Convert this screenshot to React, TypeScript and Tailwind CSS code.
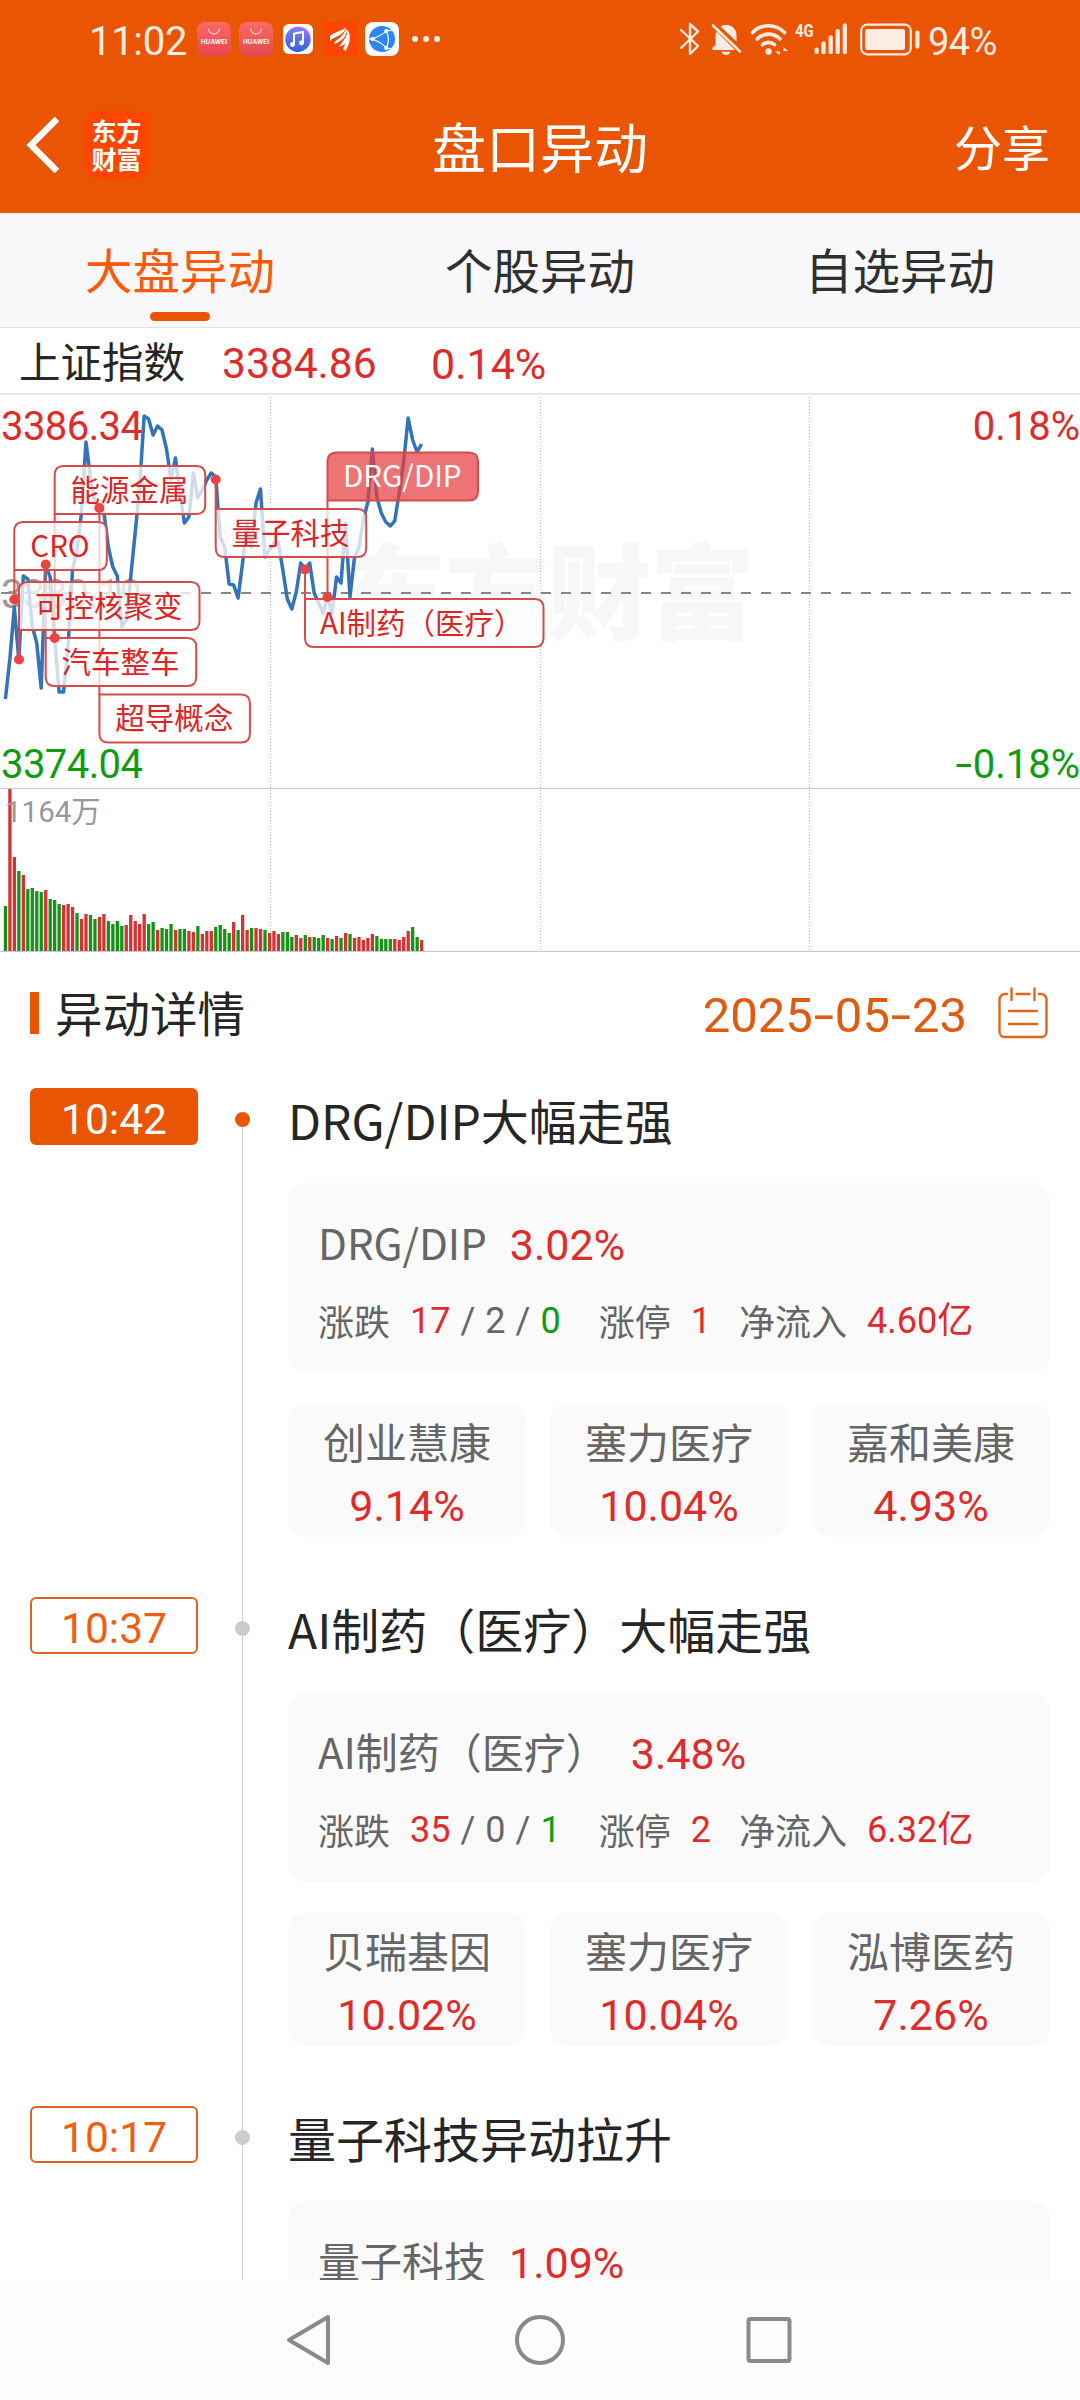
import clsx from 'clsx';

type Tone = 'up' | 'down';

interface Tag {
    label: string;
    x: number;
    y: number;
    width: number;
    dotY: number;
    active?: boolean;
}

interface Stock {
    name: string;
    change: string;
}

interface BoardStats {
    up: number;
    flat: number;
    down: number;
    limitUp: number;
    inflow: string;
}

interface Movement {
    time: string;
    title: string;
    board: string;
    change: string;
    stats?: BoardStats;
    stocks?: Stock[];
}

const MINUTE_WIDTH = 4.475;
const FIRST_MINUTE = 5.4;
const TAG_HEIGHT = 48;

// One y value per traded minute, measured from the top of the chart
const PRICES = [
    304, 264, 212, 265, 181, 184, 231, 248, 293, 170, 182, 243, 297, 297, 252, 175, 155, 118, 47, 82,
    108, 113, 117, 152, 172, 181, 232, 225, 182, 138, 92, 21, 24, 40, 31, 35, 54, 85, 63, 98,
    128, 122, 78, 103, 95, 85, 78, 82, 142, 152, 189, 190, 203, 168, 128, 152, 108, 94, 162, 155,
    148, 148, 175, 204, 214, 197, 168, 174, 168, 198, 208, 218, 202, 218, 182, 188, 128, 202, 163, 152,
    125, 107, 54, 102, 118, 127, 131, 126, 98, 67, 23, 45, 57, 49,
];

// Bar heights of the volume chart
const VOLUMES = [
    45, 162, 94, 80, 76, 62, 63, 60, 59, 61, 52, 51, 47, 46, 47, 44, 38, 32, 37, 36,
    32, 34, 37, 30, 27, 30, 25, 26, 36, 30, 27, 37, 27, 29, 21, 23, 22, 27, 21, 22,
    22, 20, 19, 25, 17, 20, 20, 24, 26, 22, 18, 29, 21, 36, 21, 23, 23, 22, 21, 18,
    20, 17, 19, 19, 14, 16, 13, 16, 14, 14, 13, 16, 13, 12, 15, 13, 18, 17, 13, 14,
    11, 13, 17, 15, 12, 12, 12, 12, 11, 14, 20, 24, 14, 11,
];

const VOLUME_TONES =
    'GRRGRGGGGRGGGRRRGRRGGRRGGGGRRRRRGGRGGGRGGRRGRRRGGGGRGRRGRRGRRRGGGRRGRGGGRGRGRGRRRRRGGGGRRRRGGR';

const TAGS: Tag[] = [
    { label: 'DRG/DIP', x: 327.5, y: 57.5, width: 150.5, dotY: 202, active: true },
    { label: 'AI制药（医疗）', x: 305, y: 204, width: 238.5, dotY: 174.5 },
    { label: '量子科技', x: 215.7, y: 114, width: 150.5, dotY: 84.5 },
    { label: '超导概念', x: 99.4, y: 299.5, width: 150.5, dotY: 113 },
    { label: '能源金属', x: 54.7, y: 71, width: 150.5, dotY: 243 },
    { label: '汽车整车', x: 45.7, y: 243, width: 150.5, dotY: 169.5 },
    { label: 'CRO', x: 14.3, y: 127, width: 92.5, dotY: 204.5 },
    { label: '可控核聚变', x: 19, y: 187, width: 180.5, dotY: 264.5 },
];

const MOVEMENTS: Movement[] = [
    {
        time: '10:42',
        title: 'DRG/DIP大幅走强',
        board: 'DRG/DIP',
        change: '3.02%',
        stats: { up: 17, flat: 2, down: 0, limitUp: 1, inflow: '4.60亿' },
        stocks: [
            { name: '创业慧康', change: '9.14%' },
            { name: '塞力医疗', change: '10.04%' },
            { name: '嘉和美康', change: '4.93%' },
        ],
    },
    {
        time: '10:37',
        title: 'AI制药（医疗）大幅走强',
        board: 'AI制药（医疗）',
        change: '3.48%',
        stats: { up: 35, flat: 0, down: 1, limitUp: 2, inflow: '6.32亿' },
        stocks: [
            { name: '贝瑞基因', change: '10.02%' },
            { name: '塞力医疗', change: '10.04%' },
            { name: '泓博医药', change: '7.26%' },
        ],
    },
    {
        time: '10:17',
        title: '量子科技异动拉升',
        board: '量子科技',
        change: '1.09%',
    },
];

const NUM = "font-['Roboto','Noto_Sans_CJK_SC',sans-serif]";

const AppGalleryIcon = () => (
    <svg width="34" height="34" viewBox="0 0 34 34">
        <defs>
            <linearGradient id="gallery" x1="0" y1="0" x2="0" y2="1">
                <stop offset="0" stopColor="#fb6a63" />
                <stop offset="1" stopColor="#e5484f" />
            </linearGradient>
        </defs>
        <rect width="34" height="34" rx="8" fill="url(#gallery)" />
        <path d="M11.5 6.500a5.500 5.500 0 0 0 11 0" fill="none" stroke="#ffc9c4" strokeWidth="1.300" />
        <text x="17" y="22" textAnchor="middle" textLength="26" fontSize="6.200" fontWeight="700" fill="#fff" fontFamily="Inter, sans-serif">HUAWEI</text>
    </svg>
);

const MusicIcon = () => (
    <svg width="30" height="30" viewBox="0 0 30 30">
        <defs>
            <linearGradient id="music" x1="0" y1="0" x2="0" y2="1">
                <stop offset="0" stopColor="#8a7cf0" />
                <stop offset="1" stopColor="#2f62dc" />
            </linearGradient>
        </defs>
        <rect width="30" height="30" rx="6" fill="#fff" />
        <circle cx="15.800" cy="14.800" r="12.500" fill="#e9a6f3" />
        <circle cx="14.800" cy="15.400" r="12.500" fill="url(#music)" />
        <path d="M11 20.500V9.500l9-1.500v11" fill="none" stroke="#fff" strokeWidth="2" />
        <circle cx="9.500" cy="20.500" r="2.400" fill="#fff" />
        <circle cx="18.500" cy="19" r="2.400" fill="#fff" />
    </svg>
);

const FlameIcon = () => (
    <svg width="34" height="34" viewBox="0 0 34 34">
        <rect width="34" height="34" fill="#ff4500" />
        <g fill="#fff">
            <path d="M7 14C11 10 17 9.500 22 6c0 4-4 6.500-8 8.500-3 1.500-5.500 2-7 4.500z" />
            <path d="M11 22c1-5 9.500-6 12-16 2 6-1 9.500-5 12.500-3 2-4 3-7 3.500z" />
            <path d="M16 25c2-5 7.500-7 8-18 3 6 1.500 11-1.500 14.500-2 2-4 2-6.500 3.500z" />
            <path d="M20 27.500c1-4 5-8 5.500-19 2.500 7 1.500 13-3 20.500z" />
        </g>
        <g fill="none" stroke="#ff4500" strokeWidth="1">
            <path d="M10 20c3-5 8-5 11-10M15 24c3-5 7-6 8.500-13" />
        </g>
    </svg>
);

const BrowserIcon = () => (
    <svg width="34" height="34" viewBox="0 0 34 34">
        <rect width="34" height="34" rx="8" fill="#fff" />
        <circle cx="17" cy="17" r="13" fill="#2f86f0" />
        <g fill="none" stroke="#fff" strokeWidth="1.200">
            <path d="M7 17C12 15 18 13 21 9" />
            <path d="M7 17c5 2 11 4 14 9" />
            <path d="M21 9c3.500 5 3 12 0 17" />
            <path d="M21 9l7-1M21 26l5 1M7 17H3" />
        </g>
        <circle cx="7.500" cy="17" r="2.100" fill="#fff" />
        <circle cx="21.300" cy="9" r="2.100" fill="#fff" />
        <circle cx="21.300" cy="26" r="2.100" fill="#fff" />
    </svg>
);

const BluetoothIcon = () => (
    <svg width="22" height="36" viewBox="0 0 22 36" fill="none" stroke="#fdece3" strokeWidth="2.400" strokeLinejoin="round" strokeLinecap="round">
        <path d="M2 9l17 16-8 8V3l8 7.500L2 27" />
    </svg>
);

const MutedBellIcon = () => (
    <svg width="31" height="34" viewBox="0 0 31 34" fill="#fdece3">
        <path d="M5.500 9.500L24 28H1.500v-2.500L4.500 23V13z" />
        <path d="M9.500 4.500c1.200-.8 1.800-1 3-1.500h5c5 1.500 8 5 8 10v6.500z" />
        <path d="M10.500 29.800h9c-1 4.200-8 4.200-9 0z" />
        <path d="M2 3.500l27 26" stroke="#fdece3" strokeWidth="2.600" strokeLinecap="round" />
    </svg>
);

const WifiIcon = () => (
    <svg width="39" height="34" viewBox="0 0 39 34" fill="none" stroke="#fdece3" strokeWidth="3.600" strokeLinecap="round">
        <path d="M2.500 10.500c9-9 23-9 32 0" />
        <path d="M7 17c6.500-6.500 16.500-6.500 23 0" />
        <path d="M12.500 22.800c3.500-3.300 8.500-3.300 12 0" />
        <circle cx="18.500" cy="29.500" r="3.200" fill="#fdece3" stroke="none" />
        <path d="M30 25v8l-5-3.500h5M33.500 33v-8l4.500 4h-4.500" fill="#fdece3" stroke="none" />
    </svg>
);

const SignalIcon = () => (
    <svg width="34" height="32" viewBox="0 0 34 32" fill="#fdece3">
        <rect x="0.500" y="24.500" width="4.200" height="6.500" rx="2" />
        <rect x="7.500" y="18.500" width="4.200" height="12.500" rx="1.500" />
        <rect x="14.600" y="12.500" width="4.200" height="18.500" rx="1.500" />
        <rect x="21.600" y="6" width="4.200" height="25" rx="1.500" />
        <rect x="28.700" y="0.500" width="4.200" height="30.500" rx="1.500" />
    </svg>
);

const BatteryIcon = () => (
    <svg width="60" height="33" viewBox="0 0 60 33" fill="#fdece3">
        <rect x="1.200" y="1.700" width="49.600" height="29.600" rx="6" fill="none" stroke="#fdece3" strokeWidth="2.200" />
        <rect x="5" y="6" width="40" height="21" rx="2.500" />
        <rect x="55.300" y="7.500" width="4.200" height="18" rx="2" />
    </svg>
);

const CalendarIcon = () => (
    <svg width="50" height="52" viewBox="0 0 50 52" fill="none" stroke="#e0661c" strokeWidth="2.400" strokeLinecap="round">
        <path d="M9 7H7a5.500 5.500 0 0 0-5.500 5.500V45a5 5 0 0 0 5 5h37a5 5 0 0 0 5-5V12.500A5.500 5.500 0 0 0 43 7h-2" />
        <path d="M13.500 1.500V13M36.500 1.500V13M18.500 7h13M11 24h28M11 37h28" />
    </svg>
);

const StatusBar = () => (
    <div className={clsx('flex h-[78px] items-center pl-[89px] text-[#fdece3]', NUM)}>
        <span className="w-[108px] pt-[5px] text-[40px] leading-[40px] tracking-[-0.3px]">11:02</span>
        <div className="flex items-center">
            <AppGalleryIcon />
            <div className="ml-2"><AppGalleryIcon /></div>
            <div className="ml-[10px]"><MusicIcon /></div>
            <div className="ml-[10px]"><FlameIcon /></div>
            <div className="ml-2"><BrowserIcon /></div>
        </div>
        <div className="ml-[13px] flex gap-[5px]">
            <span className="size-[6px] rounded-full bg-[#fdece3]" />
            <span className="size-[6px] rounded-full bg-[#fdece3]" />
            <span className="size-[6px] rounded-full bg-[#fdece3]" />
        </div>
        <div className="ml-auto mr-[83px] flex items-center">
            <BluetoothIcon />
            <div className="ml-[10px]"><MutedBellIcon /></div>
            <div className="ml-[8px]"><WifiIcon /></div>
            <span className="mb-[17px] ml-[6px] w-[18px] origin-left scale-x-[0.78] text-[19px] font-bold leading-[20px]">4G</span>
            <div className="ml-[1px]"><SignalIcon /></div>
            <div className="ml-[12px]"><BatteryIcon /></div>
            <span className="ml-[8px] w-[69px] pt-[5px] text-[38px] leading-[38px] tracking-[-0.6px]">94%</span>
        </div>
    </div>
);

const TitleBar = () => (
    <div className="grid h-[135px] grid-cols-3 items-center pb-[2px]">
        <div className="flex items-center pl-[26px]">
            <svg width="33" height="56" viewBox="0 0 33 56" fill="none" stroke="#fff" strokeWidth="6.500">
                <path d="M31 2L5 28l26 26" />
            </svg>
            <div className="ml-[24px] flex h-[67px] w-[67px] flex-col items-center justify-center rounded-[14px] bg-[#ff4600] pb-[2px] text-[25px] font-bold leading-[28px] text-white">
                <span>东方</span>
                <span>财富</span>
            </div>
        </div>
        <h1 className="pt-[2px] text-center text-[54px] leading-none text-white">盘口异动</h1>
        <span className="pr-[30px] text-right text-[48px] leading-none text-white">分享</span>
    </div>
);

const Tabs = () => (
    <div className="grid h-[115px] shrink-0 grid-cols-3 border-b border-[#e2e2e2] bg-[#f8f8fa]">
        {['大盘异动', '个股异动', '自选异动'].map((tab, i) => (
            <div
                key={tab}
                className={clsx(
                    'flex flex-col items-center pt-[27px] text-[47.5px] leading-[58px]',
                    i === 0 ? 'text-[#fb5a08]' : 'text-[#303030]'
                )}
            >
                {tab}
                {i === 0 && <span className="mt-[14px] h-[9px] w-[60px] rounded-full bg-[#ea5504]" />}
            </div>
        ))}
    </div>
);

const tagPath = ({ x, y, width, dotY }: Tag) => {
    const r = 9;
    const right = x + width;
    const bottom = y + TAG_HEIGHT;
    // The corner the pointer leaves from stays square
    const below = dotY > y + TAG_HEIGHT / 2;
    const topLeft = below ? `M${x} ${y + r}Q${x} ${y} ${x + r} ${y}` : `M${x} ${y}`;
    const bottomLeft = below ? `H${x}` : `H${x + r}Q${x} ${bottom} ${x} ${bottom - r}`;
    return `${topLeft}H${right - r}Q${right} ${y} ${right} ${y + r}V${bottom - r}Q${right} ${bottom} ${right - r} ${bottom}${bottomLeft}Z`;
};

const MarketChart = () => {
    const points = PRICES.map((y, i) => `${FIRST_MINUTE + i * MINUTE_WIDTH},${y}`).join(' ');

    return (
        <svg width="1080" height="557" viewBox="0 0 1080 557" className="block shrink-0">
            <text x="342" y="237" textLength="412" fontSize="104" fontWeight="900" fill="#f7f7f7" fontFamily="Noto Sans CJK SC, sans-serif">东方财富</text>

            {/* Grid */}
            {[270.5, 540.5, 809.5].map(x => (
                <path key={x} d={`M${x} 2V556`} stroke="#b8b8b8" strokeDasharray="1 2" />
            ))}
            <path d="M0 393.500H1080M0 556.500H1080" stroke="#c8c8c8" />

            <g fontFamily="Roboto, Noto Sans CJK SC, sans-serif" fontSize="40">
                <text x="1" y="212.500" textLength="141" fill="#999">3380.19</text>
                <path d="M1 198H1072" stroke="#868686" strokeWidth="2" strokeDasharray="10 10" />
                <polyline points={points} fill="none" stroke="#3373b9" strokeWidth="3.500" strokeLinejoin="round" />
                <text x="1" y="44.500" textLength="142" fill="#e02b2b">3386.34</text>
                <text x="1" y="383" textLength="142" fill="#109c10">3374.04</text>
                <text x="1080" y="44.500" textAnchor="end" fill="#e02b2b">0.18%</text>
                <text x="1080" y="383" textAnchor="end" fill="#109c10">0.18%</text>
                <text transform="translate(955.500 383) scale(1.500 1)" fill="#109c10">-</text>
            </g>

            {/* Volume */}
            {VOLUMES.map((h, i) => (
                <rect
                    key={i}
                    x={FIRST_MINUTE + i * MINUTE_WIDTH - 1.6}
                    y={556 - h}
                    width="3.300"
                    height={h}
                    fill={VOLUME_TONES[i] === 'R' ? '#d53232' : '#169316'}
                />
            ))}
            <text x="5" y="427" fontSize="29.500" fill="#999" fontFamily="Roboto, Noto Sans CJK SC, sans-serif">1164万</text>

            {/* Sector tags */}
            {TAGS.map(tag => (
                <g key={tag.label}>
                    <path
                        d={`M${tag.x} ${tag.dotY}V${tag.dotY > tag.y ? tag.y + TAG_HEIGHT : tag.y}`}
                        stroke="#de4b4b"
                        strokeWidth="2"
                    />
                    <path
                        d={tagPath(tag)}
                        fill={tag.active ? '#e83d40' : '#fff'}
                        fillOpacity={tag.active ? 0.72 : 0.76}
                        stroke="#d64c4c"
                        strokeWidth="2"
                    />
                    <text
                        x={tag.label.startsWith('AI') ? tag.x + 15 : tag.x + tag.width / 2 - 0.5}
                        y={tag.y + 34.5}
                        textAnchor={tag.label.startsWith('AI') ? 'start' : 'middle'}
                        fontSize="29.500"
                        fill={tag.active ? '#fff' : '#dc2626'}
                        fontFamily="Noto Sans CJK SC, sans-serif"
                    >
                        {tag.label}
                    </text>
                </g>
            ))}
            {TAGS.map(tag => (
                <circle key={tag.label} cx={tag.x} cy={tag.dotY} r="5" fill="#e74444" />
            ))}
        </svg>
    );
};

const Num = ({ tone, className, children }: { tone?: Tone; className?: string; children: React.ReactNode }) => (
    <span
        className={clsx(
            NUM,
            tone === 'up' && 'text-[#e02b2b]',
            tone === 'down' && 'text-[#0f9d0f]',
            className
        )}
    >
        {children}
    </span>
);

const StatsRow = ({ stats }: { stats: BoardStats }) => (
    <div className="flex pt-[22px] text-[36px] leading-[50px]">
        <span className="-mt-px">涨跌</span>
        <span className="ml-[20px] flex gap-[10px]">
            <Num tone="up">{stats.up}</Num>
            <Num>/</Num>
            <Num>{stats.flat}</Num>
            <Num>/</Num>
            <Num tone="down">{stats.down}</Num>
        </span>
        <span className="-mt-px ml-[38px] mr-[20px]">涨停</span>
        <Num tone="up">{stats.limitUp}</Num>
        <span className="-mt-px ml-[28px] mr-[20px]">净流入</span>
        <Num tone="up">{stats.inflow}</Num>
    </div>
);

const MovementItem = ({ item, active }: { item: Movement; active: boolean }) => (
    <div className="flex h-[509px] shrink-0 pl-[30px]">
        <div
            className={clsx(
                'flex h-[57px] w-[168px] items-center justify-center rounded-[6px] border-2 pt-[7px] text-[42.5px] leading-none',
                NUM,
                active ? 'border-[#ea5504] bg-[#ea5504] text-white' : 'border-[#dd6420] text-[#ef5f12]'
            )}
        >
            {item.time}
        </div>
        <div className={clsx('relative flex w-[90px] pl-[44px]', active && 'pt-[30px]')}>
            <span className="h-full w-px bg-[#cccccc]" />
            <span
                className={clsx(
                    'absolute top-[24px] left-[37px] size-[15px] rounded-full',
                    active ? 'bg-[#ea5504]' : 'bg-[#cccccc]'
                )}
            />
        </div>
        <div className="w-[762px]">
            <h3 className="text-[48px] leading-[62px] text-[#262626]">{item.title}</h3>
            <div className="mt-[33px] h-[190px] rounded-[18px] bg-[#fafafa] pl-[30px] text-[#666666]">
                <div className="flex h-[91px] gap-[23px] pt-[31px] text-[42px] leading-[60px]">
                    <span className="-mt-[2px]">{item.board}</span>
                    <Num tone="up" className="mt-px text-[43px]">{item.change}</Num>
                </div>
                {item.stats && <StatsRow stats={item.stats} />}
            </div>
            {item.stocks && (
                <div className="mt-[30px] grid grid-cols-3 gap-[24px]">
                    {item.stocks.map(stock => (
                        <div key={stock.name} className="flex h-[134px] flex-col items-center rounded-[18px] bg-[#fafafa] pt-[8px] text-[42px] leading-[60px] text-[#666666]">
                            <span>{stock.name}</span>
                            <Num tone="up" className="mt-[5px] text-[43px]">{stock.change}</Num>
                        </div>
                    ))}
                </div>
            )}
        </div>
    </div>
);

const NavBar = () => (
    <div className="flex h-[120px] shrink-0 items-center bg-[#fcfcfc] pl-[286px]">
        <svg width="506" height="52" viewBox="0 0 506 52" fill="none" stroke="#8a8a8a" strokeWidth="4" strokeLinejoin="round">
            <path d="M42 3v46L3 26z" />
            <circle cx="254" cy="26" r="23" />
            <rect x="462.500" y="5" width="41" height="42" rx="2" />
        </svg>
    </div>
);

const App = () => (
    <div className="flex h-[2400px] w-[1080px] flex-col overflow-hidden bg-white font-['Noto_Sans_CJK_SC',sans-serif]">
        <header className="h-[213px] shrink-0 bg-[#ea5504]">
            <StatusBar />
            <TitleBar />
        </header>
        <Tabs />
        <div className="flex h-[67px] shrink-0 items-center border-b-2 border-[#e9e9e9] pl-[19px] text-[42px] leading-none text-[#262626]">
            <span className="w-[203px] text-[41.5px]">上证指数</span>
            <span className={clsx('w-[209px] pt-[7px] text-[42.5px] text-[#e02b2b]', NUM)}>3384.86</span>
            <span className={clsx('pt-[7px] text-[43px] text-[#e02b2b]', NUM)}>0.14%</span>
        </div>
        <MarketChart />
        <main className="flex min-h-0 flex-1 flex-col overflow-hidden">
            <div className="flex h-[136px] shrink-0 items-start pl-[30px] pr-[32px] pt-[36px]">
                <span className="mt-[4px] h-[42px] w-[9px] bg-[#ea5504]" />
                <h2 className="ml-[16px] text-[47.5px] leading-[48px] text-[#262626]">异动详情</h2>
                <div className={clsx('ml-auto flex pt-[4px] text-[49px] leading-[48px] text-[#dd5c10]', NUM)}>
                    2025
                    <span className="w-[22px] scale-x-150 text-center">-</span>
                    05
                    <span className="w-[22px] scale-x-150 text-center">-</span>
                    23
                </div>
                <div className="-mt-px ml-[31px]"><CalendarIcon /></div>
            </div>
            {MOVEMENTS.map((item, i) => (
                <MovementItem key={item.time} item={item} active={i === 0} />
            ))}
        </main>
        <NavBar />
    </div>
);

export default App;
